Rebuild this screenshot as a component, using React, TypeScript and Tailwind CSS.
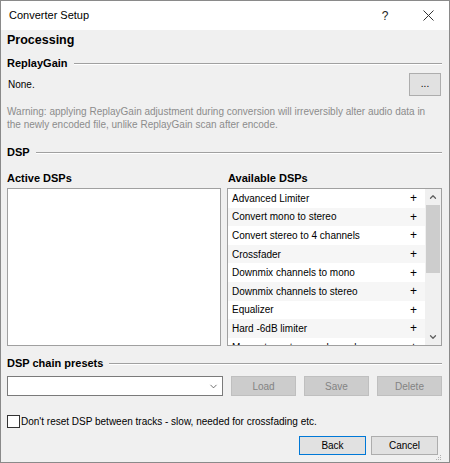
import { ChevronDown, ChevronUp } from 'lucide-react';

const available = [
  'Advanced Limiter',
  'Convert mono to stereo',
  'Convert stereo to 4 channels',
  'Crossfader',
  'Downmix channels to mono',
  'Downmix channels to stereo',
  'Equalizer',
  'Hard -6dB limiter',
  'Move stereo to rear channels',
];

const SectionTitle = ({ label, size = 'text-[11px]' }: { label: string; size?: string }) => (
  <div className="flex h-[16px] items-center gap-[6px]">
    <span className={`${size} font-bold leading-[16px] text-black`}>{label}</span>
    <div className="h-px flex-1 bg-[#a0a0a0] shadow-[0_1px_0_#ffffff]"></div>
  </div>
);

const App = () => {
  return (
    <div className="flex h-[463px] w-[450px] flex-col border border-[#8a8a8a] bg-[#f0f0f0] font-['Liberation_Sans',Arial,sans-serif] text-[10px] text-black">
      <header className="flex h-[29px] items-center bg-white pl-[8px]">
        <span className="flex-1 text-[11px] text-black">Converter Setup</span>
        <span className="w-[20px] text-center text-[12px] text-[#222]">?</span>
        <div className="ml-[23px] mr-[11px] flex h-[29px] w-[20px] items-center justify-center">
          <svg width="11" height="11" viewBox="0 0 11 11" stroke="#333" strokeWidth="1">
            <path d="M0.5 0.5 L10.5 10.5 M10.5 0.5 L0.5 10.5" />
          </svg>
        </div>
      </header>

      <main className="flex flex-1 flex-col pl-[6px] pr-[7px] pt-[2px]">
        <h1 className="h-[16px] text-[12.5px] font-bold leading-[16px]">Processing</h1>

        <div className="mt-[7px]">
          <SectionTitle label="ReplayGain" />
        </div>

        <div className="mt-[2px] flex h-[23px] items-center justify-between">
          <span className="pl-[1px]">None.</span>
          <button
            type="button"
            className="mr-[1px] flex h-[23px] w-[32px] items-start justify-center border border-[#adadad] bg-[#e1e1e1] pt-[5px] text-[10px] leading-[10px]"
          >
            ...
          </button>
        </div>

        <p className="mt-[9px] text-[10px] leading-[13px] text-[#8c8c8c]">
          Warning: applying ReplayGain adjustment during conversion will irreversibly alter audio data in
          <br />
          the newly encoded file, unlike ReplayGain scan after encode.
        </p>

        <div className="mt-[13px]">
          <SectionTitle label="DSP" />
        </div>

        <div className="mt-[10px] grid grid-cols-[214px_1fr] gap-x-[6px]">
          <h2 className="h-[16px] text-[11px] font-bold leading-[16px]">Active DSPs</h2>
          <h2 className="h-[16px] pl-[1px] text-[11px] font-bold leading-[16px]">Available DSPs</h2>

          <div className="mt-[2px] h-[158px] border border-[#a0a0a0] bg-white"></div>

          <div className="mt-[2px] flex h-[158px] overflow-hidden border border-[#a0a0a0] bg-white">
            <ul className="flex flex-1 flex-col">
              {available.map((name, i) => (
                <li
                  key={name}
                  className={`flex h-[18.6px] shrink-0 items-center pl-[4px] ${i % 2 === 1 ? 'bg-[#f6f6f6]' : 'bg-white'}`}
                >
                  <span className="flex-1 whitespace-nowrap">{name}</span>
                  <span className="w-[20px] pr-[3px] text-center text-[12px] leading-[12px]">+</span>
                </li>
              ))}
            </ul>
            <div className="flex w-[16px] flex-col bg-[#f0f0f0]">
              <div className="flex h-[16px] items-center justify-center">
                <ChevronUp size={10} strokeWidth={3} color="#606060" />
              </div>
              <div className="mx-[1px] h-[68px] bg-[#cdcdcd]"></div>
              <div className="flex-1"></div>
              <div className="flex h-[16px] items-center justify-center">
                <ChevronDown size={10} strokeWidth={3} color="#606060" />
              </div>
            </div>
          </div>
        </div>

        <div className="mt-[9px]">
          <SectionTitle label="DSP chain presets" />
        </div>

        <div className="mt-[5px] flex h-[20px] gap-[8px]">
          <div className="flex w-[216px] items-center justify-end border border-[#7a7a7a] bg-white pr-[3px]">
            <ChevronDown size={11} strokeWidth={1.5} color="#333" />
          </div>
          <button type="button" className="w-[65px] border border-[#bfbfbf] bg-[#cccccc] text-[10px] text-[#838383]">
            Load
          </button>
          <button type="button" className="w-[65px] border border-[#bfbfbf] bg-[#cccccc] text-[10px] text-[#838383]">
            Save
          </button>
          <button type="button" className="w-[65px] border border-[#bfbfbf] bg-[#cccccc] text-[10px] text-[#838383]">
            Delete
          </button>
        </div>

        <label className="mt-[18px] flex h-[14px] items-center gap-[1px]">
          <span className="h-[13px] w-[13px] border border-[#333] bg-white"></span>
          <span>Don't reset DSP between tracks - slow, needed for crossfading etc.</span>
        </label>

        <div className="mt-[8px] flex justify-end gap-[5px] pr-[4px]">
          <button type="button" className="h-[19px] w-[67px] border border-[#0078d7] bg-[#e1e1e1] text-[10px]">
            Back
          </button>
          <button type="button" className="h-[19px] w-[67px] border border-[#adadad] bg-[#e1e1e1] text-[10px]">
            Cancel
          </button>
        </div>

        <div className="flex flex-1 items-end justify-end pb-[1px]">
          <svg width="6" height="6" viewBox="0 0 6 6" fill="#b0b0b0">
            <rect x="4" y="0" width="1" height="1" />
            <rect x="2" y="2" width="1" height="1" />
            <rect x="4" y="2" width="1" height="1" />
            <rect x="0" y="4" width="1" height="1" />
            <rect x="2" y="4" width="1" height="1" />
            <rect x="4" y="4" width="1" height="1" />
          </svg>
        </div>
      </main>
    </div>
  );
};

export default App;
